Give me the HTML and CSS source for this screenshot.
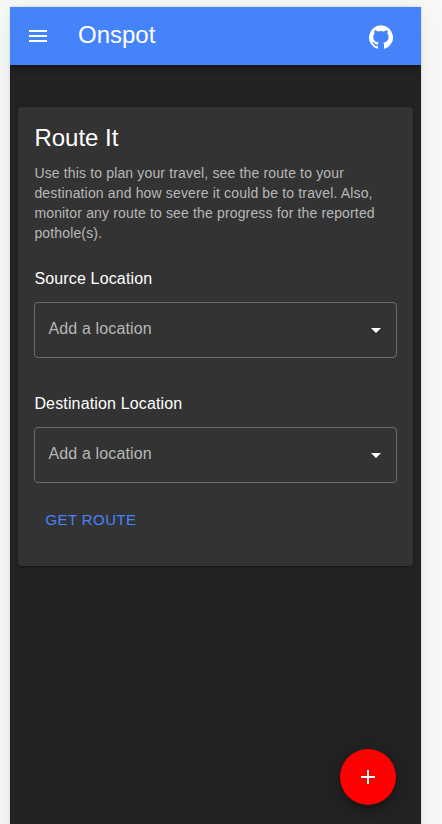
FILE: index.html
```html
<!DOCTYPE html>
<html lang="en">
<head>
<meta charset="utf-8">
<title>Onspot</title>
<link rel="stylesheet" href="styles.css">
</head>
<body>
<div class="phone">
  <header class="bar">
    <svg class="icon" viewBox="0 0 24 24"><path d="M3 18h18v-2H3v2zm0-5h18v-2H3v2zm0-7v2h18V6H3z"/></svg>
    <h1 class="brand">Onspot</h1>
    <svg class="icon github" viewBox="0 0 24 24"><path d="M12 .3a12 12 0 0 0-3.8 23.4c.6.1.8-.3.8-.6v-2c-3.3.7-4-1.6-4-1.6-.6-1.4-1.4-1.8-1.4-1.8-1-.7.1-.7.1-.7 1.2 0 1.9 1.2 1.9 1.2 1 1.8 2.8 1.3 3.5 1 0-.8.4-1.3.7-1.6-2.7-.3-5.5-1.3-5.5-6 0-1.2.5-2.3 1.3-3.1-.2-.4-.6-1.6 0-3.2 0 0 1-.3 3.4 1.2a11.5 11.5 0 0 1 6 0c2.3-1.5 3.3-1.2 3.3-1.2.6 1.6.2 2.8 0 3.2.9.8 1.3 1.9 1.3 3.2 0 4.6-2.8 5.6-5.5 5.9.5.4.9 1 .9 2.2v3.3c0 .3.1.7.8.6A12 12 0 0 0 12 .3"/></svg>
  </header>
  <main class="card">
    <h2 class="title">Route It</h2>
    <p class="text">Use this to plan your travel, see the route to your destination and how severe it could be to travel. Also, monitor any route to see the progress for the reported pothole(s).</p>
    <div class="label">Source Location</div>
    <div class="field"><span>Add a location</span><svg class="icon" viewBox="0 0 24 24"><path d="M7 10l5 5 5-5z"/></svg></div>
    <div class="label">Destination Location</div>
    <div class="field"><span>Add a location</span><svg class="icon" viewBox="0 0 24 24"><path d="M7 10l5 5 5-5z"/></svg></div>
    <button class="action">GET ROUTE</button>
  </main>
  <button class="fab" aria-label="Add"><svg class="icon" viewBox="0 0 24 24"><path d="M19 13h-6v6h-2v-6H5v-2h6V5h2v6h6v2z"/></svg></button>
</div>
</body>
</html>
```
FILE: styles.css
```css
* { box-sizing: border-box; }
body {
  margin: 0;
  height: 824px;
  overflow: hidden;
  padding: 7px 21px 0 10px;
  background: #f8faf9;
  font-family: "Liberation Sans", Arial, sans-serif;
  color: #fff;
}
h1, h2, p { margin: 0; font-weight: 400; }
.phone {
  position: relative;
  height: 840px;
  background: #222;
  box-shadow: 0 0 2px rgba(0, 0, 0, .18), 0 2px 28px rgba(0, 0, 0, .08);
}
.icon { display: block; width: 24px; height: 24px; fill: currentColor; flex: none; }
.bar {
  display: flex;
  align-items: center;
  height: 58px;
  padding: 0 28px 0 16px;
  background: #4583fb;
  box-shadow: 0 2px 4px -1px rgba(0, 0, 0, .2), 0 4px 5px rgba(0, 0, 0, .14), 0 1px 10px rgba(0, 0, 0, .12);
  clip-path: inset(0 0 -20px 0);
}
.brand { flex: 1; margin-left: 28px; font-size: 24px; line-height: 32px; padding-bottom: 2px; }
.github { margin-top: 2px; }
.card {
  height: 459px;
  margin: 42px 8px 0;
  padding: 15px 16px 16px;
  background: #333;
  border-radius: 4px;
  box-shadow: 0 2px 1px -1px rgba(0, 0, 0, .2), 0 1px 1px rgba(0, 0, 0, .14), 0 1px 3px rgba(0, 0, 0, .12);
}
.title, .text, .label { padding-left: .4px; }
.title { font-size: 24px; line-height: 32px; margin-bottom: 9px; }
.text { font-size: 14px; line-height: 20px; letter-spacing: .01071em; color: #b8b8b8; }
.label { margin-top: 24px; font-size: 16px; line-height: 24px; letter-spacing: .00938em; }
.field {
  display: flex;
  align-items: center;
  justify-content: space-between;
  height: 56px;
  margin: 11px 0 34px;
  padding: 0 8px 0 13.4px;
  border: 1px solid #6b6b6b;
  border-radius: 4px;
  font-size: 16px;
  letter-spacing: .00938em;
  color: #b8b8b8;
}
.field .icon { color: #fff; }
.field span { padding-bottom: 2px; }
.field + .label { margin-top: 0; }
.action {
  display: block;
  margin-top: -18px;
  padding: 8px 11.4px;
  border: 0;
  background: none;
  color: #4583fb;
  font: 15px/26px "Liberation Sans", Arial, sans-serif;
  letter-spacing: .02857em;
}
.fab {
  position: absolute;
  right: 25px;
  top: 742px;
  display: grid;
  place-items: center;
  width: 56px;
  height: 56px;
  padding: 0;
  border: 0;
  border-radius: 50%;
  background: #f00;
  color: #fff;
  box-shadow: 0 3px 5px -1px rgba(0, 0, 0, .2), 0 6px 10px rgba(0, 0, 0, .14), 0 1px 18px rgba(0, 0, 0, .12);
}
```
